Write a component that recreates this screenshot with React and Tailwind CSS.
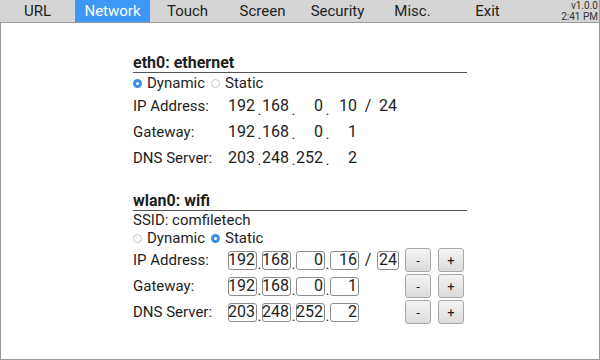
import React from "react";

const tabs = ["URL", "Network", "Touch", "Screen", "Security", "Misc.", "Exit"];

const Radio = ({ checked, label }) => (
  <label className="flex items-center gap-[5px]">
    <span
      className={
        checked
          ? "w-[9px] h-[9px] rounded-full border-[3px] border-[#3b8fe8] bg-white"
          : "w-[9px] h-[9px] rounded-full border border-[#c4c4c4] bg-white"
      }
    />
    <span>{label}</span>
  </label>
);

const Octet = ({ value, boxed, wide }) => (
  <span
    className={
      (wide ? "w-[22px] " : "w-[29px] ") +
      "h-[19px] flex items-center justify-end pr-[1px] leading-none text-[16px] " +
      (boxed ? "border border-[#8c8c8c] rounded-[3px] bg-white" : "border border-transparent")
    }
  >
    {value}
  </span>
);

const Dot = () => <span className="w-[5px] self-end leading-[15px] text-center">.</span>;

const AddrRow = ({ label, parts, prefix, boxed, buttons }) => (
  <div className="flex items-center h-[26px]">
    <span className="w-[95px]">{label}</span>
    <div className="flex items-center">
      {parts.map((p, i) => (
        <React.Fragment key={i}>
          <Octet value={p} boxed={boxed} />
          {i < 3 && <Dot />}
        </React.Fragment>
      ))}
      {prefix ? (
        <>
          <span className="w-[18px] text-center text-[16px]">/</span>
          <Octet value={prefix} boxed={boxed} wide />
        </>
      ) : (
        <span className="w-[40px]" />
      )}
      {buttons && (
        <div className="flex items-center gap-[7px] ml-[6px]">
          <button className="w-[26px] h-[24px] rounded-[3px] border border-[#a8a8a8] bg-gradient-to-b from-[#f4f4f4] to-[#dcdcdc] text-[13px] leading-none">
            -
          </button>
          <button className="w-[26px] h-[24px] rounded-[3px] border border-[#a8a8a8] bg-gradient-to-b from-[#f4f4f4] to-[#dcdcdc] text-[13px] leading-none">
            +
          </button>
        </div>
      )}
    </div>
  </div>
);

export default function App() {
  return (
    <div className="w-[600px] h-[360px] flex flex-col bg-white text-[#1e1e1e] font-['Roboto',sans-serif]">
      <div className="h-[23px] flex bg-[#d5d5d5] border-b border-[#9a9a9a] border-r text-[15px]">
        {tabs.map((t) => (
          <div
            key={t}
            className={
              "w-[75px] flex items-center justify-center " +
              (t === "Network" ? "bg-[#3d98f5] text-white" : "")
            }
          >
            {t}
          </div>
        ))}
        <div className="flex-1 flex flex-col items-end justify-center pr-[1px] text-[10px] leading-[11px] text-[#333]">
          <span>v1.0.0</span>
          <span>2:41 PM</span>
        </div>
      </div>

      <div className="flex-1 border-x border-b border-[#9a9a9a] pt-[31px] pl-[132px] text-[15px]">
        <div className="w-[334px]">
          <div className="font-bold text-[16px] leading-[18px] border-b border-[#555]">eth0: ethernet</div>
          <div className="flex items-center gap-[6px] h-[20px]">
            <Radio checked label="Dynamic" />
            <Radio label="Static" />
          </div>
          <AddrRow label="IP Address:" parts={["192", "168", "0", "10"]} prefix="24" />
          <AddrRow label="Gateway:" parts={["192", "168", "0", "1"]} />
          <AddrRow label="DNS Server:" parts={["203", "248", "252", "2"]} />

          <div className="font-bold text-[16px] leading-[18px] border-b border-[#555] mt-[21px]">wlan0: wifi</div>
          <div className="h-[18px] flex items-center">SSID: comfiletech</div>
          <div className="flex items-center gap-[6px] h-[18px]">
            <Radio label="Dynamic" />
            <Radio checked label="Static" />
          </div>
          <AddrRow label="IP Address:" parts={["192", "168", "0", "16"]} prefix="24" boxed buttons />
          <AddrRow label="Gateway:" parts={["192", "168", "0", "1"]} boxed buttons />
          <AddrRow label="DNS Server:" parts={["203", "248", "252", "2"]} boxed buttons />
        </div>
      </div>
    </div>
  );
}
